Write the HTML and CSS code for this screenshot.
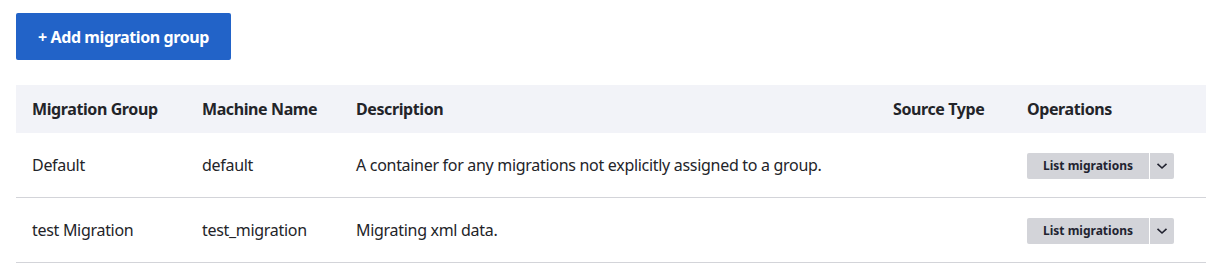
FILE: index.html
```html
<!DOCTYPE html>
<html>
<head>
<meta charset="utf-8">
<link rel="stylesheet" href="styles.css">
</head>
<body>
<div class="page">
  <div class="actions">
    <a class="btn-primary" href="#">+ Add migration group</a>
  </div>
  <table class="groups">
    <thead>
      <tr>
        <th class="c-group">Migration Group</th>
        <th class="c-machine">Machine Name</th>
        <th class="c-desc">Description</th>
        <th class="c-source">Source Type</th>
        <th class="c-ops">Operations</th>
      </tr>
    </thead>
    <tbody>
      <tr>
        <td>Default</td>
        <td>default</td>
        <td>A container for any migrations not explicitly assigned to a group.</td>
        <td></td>
        <td>
          <div class="dropbutton">
            <a class="dropbutton-main" href="#">List migrations</a>
            <span class="dropbutton-toggle"><svg width="12" height="8" viewBox="0 0 12 8"><path d="M1.5 1.8 L6 6 L10.5 1.8" fill="none" stroke="#222330" stroke-width="1.6"/></svg></span>
          </div>
        </td>
      </tr>
      <tr>
        <td>test Migration</td>
        <td>test_migration</td>
        <td>Migrating xml data.</td>
        <td></td>
        <td>
          <div class="dropbutton">
            <a class="dropbutton-main" href="#">List migrations</a>
            <span class="dropbutton-toggle"><svg width="12" height="8" viewBox="0 0 12 8"><path d="M1.5 1.8 L6 6 L10.5 1.8" fill="none" stroke="#222330" stroke-width="1.6"/></svg></span>
          </div>
        </td>
      </tr>
    </tbody>
  </table>
</div>
</body>
</html>
```
FILE: styles.css
```css
html, body {
  margin: 0;
  padding: 0;
  background: #fff;
}
body {
  font-family: "Noto Sans", "DejaVu Sans", sans-serif;
  color: #232429;
  font-size: 16px;
}
.page {
  padding: 13px 26px 0 16px;
}
.actions {
  display: flex;
  margin-bottom: 25px;
}
.btn-primary {
  display: inline-flex;
  align-items: center;
  justify-content: center;
  width: 215px;
  height: 47px;
  box-sizing: border-box;
  background: #2263c8;
  color: #fff;
  font-weight: 700;
  font-size: 16px;
  text-decoration: none;
  border-radius: 2px;
  letter-spacing: -0.4px;
}
.groups {
  width: 1190px;
  border-collapse: collapse;
}
.groups th {
  background: #f2f3f8;
  height: 48px;
  padding: 0 16px;
  text-align: left;
  font-weight: 700;
  letter-spacing: -0.4px;
}
.groups td {
  height: 64px;
  padding: 0 16px;
  border-bottom: 1px solid #d3d4d9;
  letter-spacing: -0.3px;
}
.c-group { width: 138px; }
.c-machine { width: 122px; }
.c-desc { width: 505px; }
.c-source { width: 102px; }
.dropbutton {
  display: inline-flex;
  height: 26px;
  border-radius: 2px;
  overflow: hidden;
  margin-top: 1px;
}
.dropbutton-main {
  display: flex;
  align-items: center;
  justify-content: center;
  width: 122px;
  background: #d3d4d9;
  color: #222330;
  font-size: 12px;
  font-weight: 700;
  text-decoration: none;
  letter-spacing: 0;
}
.dropbutton-toggle {
  display: flex;
  align-items: center;
  justify-content: center;
  width: 24px;
  margin-left: 1px;
  background: #d3d4d9;
}
```
